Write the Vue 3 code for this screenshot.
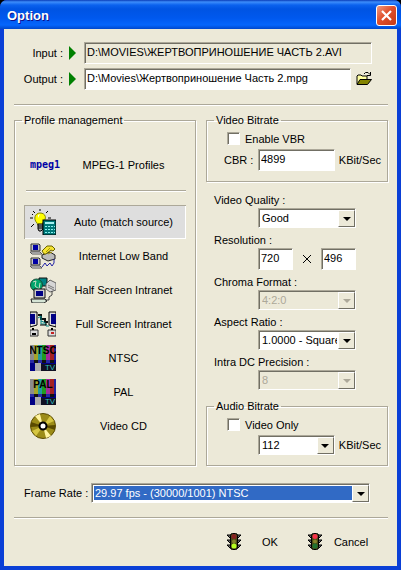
<template>
  <form class="window" @submit.prevent>
    <header class="title-bar">
      <h1>Option</h1>
      <button type="button" class="close" aria-label="Close">
        <svg viewBox="0 0 21 21" width="21" height="21">
          <path d="M6 6L15 15M15 6L6 15" stroke="#fff" stroke-width="2.2" />
        </svg>
      </button>
    </header>

    <main class="content">
      <section class="files">
        <div class="file-row">
          <label for="input-file">Input :</label>
          <span class="marker"></span>
          <input id="input-file" v-model="inputFile" class="field" type="text" readonly />
        </div>
        <div class="file-row">
          <label for="output-file">Output :</label>
          <span class="marker"></span>
          <input id="output-file" v-model="outputFile" class="field" type="text" />
          <button type="button" class="browse" aria-label="Browse">
            <svg viewBox="0 0 16 16" width="16" height="16">
              <path d="M1 13V5L2 4H5L6 5H11V8" fill="#ffffa0" stroke="#000" />
              <path d="M1 13.5L4 8.5H15.5L11.5 13.5Z" fill="#848400" stroke="#000" />
              <path d="M8 3L9.500 1.500H12L14 3.500M14.500 1V4.500H11" fill="none" stroke="#000" />
            </svg>
          </button>
        </div>
      </section>

      <hr />

      <div class="panels">
        <fieldset class="profiles">
          <legend>Profile management</legend>
          <div class="profile-head">
            <span class="mpeg">mpeg1</span>
            <span>MPEG-1 Profiles</span>
          </div>
          <hr />
          <div class="profile-list">
            <button
              v-for="p in profiles"
              :key="p.id"
              type="button"
              class="profile"
              :class="{ active: p.id === profile }"
              :aria-pressed="p.id === profile"
              @click="profile = p.id"
            >
              <svg viewBox="0 0 26 26" width="26" height="26" aria-hidden="true">
                <g v-if="p.id === 'auto'">
                  <path d="M10 0V2M3 2L5 4M18 2L16 4M0 9H3M18 9H21M1 18L4 15M2 5L3 6" stroke="#000" />
                  <path d="M7 14C3 10 5 4 10 4C16 4 17 10 13 13L12 18H9Z" fill="#ffff00" stroke="#848400" />
                  <path d="M8 6L10 5L8 9Z" fill="#fff" />
                  <path d="M8 15H13V20L11 22H9L8 20Z" fill="#aaa" stroke="#000" />
                  <path d="M8 17H13M8 19H13" stroke="#000" />
                  <rect x="13" y="11" width="13" height="15" fill="#007878" stroke="#000" />
                  <rect x="15" y="13" width="9" height="2" fill="#a5f0f0" />
                  <path d="M15 17.500H25M15 20.500H25M15 23.500H25" stroke="#8ee" stroke-dasharray="2 1" />
                </g>
                <g v-else-if="p.id === 'low'">
                  <g v-for="y in [0, 14]" :key="y" :transform="`translate(0 ${y})`">
                    <path d="M1 1H9L10 2V8H1Z" fill="#c6c6c6" stroke="#333" />
                    <rect x="3" y="2" width="5" height="5" fill="#0000a5" />
                    <path d="M0 9H10L12 11H2Z" fill="#eee" stroke="#555" />
                  </g>
                  <path d="M12 12L20 9L25 12V16L18 18L12 15Z" fill="#bbb" stroke="#222" />
                  <path d="M12 8L17 3L22 3L25 6L23 8L21 7L16 11L14 11Z" fill="#f5e431" stroke="#6b6300" />
                  <path d="M16 9L20 5M18 11L22 9" stroke="#a59400" />
                  <path d="M12 24L15 20L17 23L20 20L22 23L24 20V16" fill="none" stroke="#2222a5" />
                </g>
                <g v-else-if="p.id === 'half'">
                  <path d="M9 1H17V9H9Z" fill="#008484" stroke="#111" />
                  <path d="M16 7L20 3L26 6V13L20 15L16 12Z" fill="#d6d6d6" stroke="#666" />
                  <path d="M18 8L24 11M18 10L24 13" stroke="#777" />
                  <circle cx="6.500" cy="8" r="6" fill="#00a56b" stroke="#174b38" />
                  <path d="M3 5L6 4L5 9L9 12L10 6" fill="none" stroke="#c6dec6" />
                  <path d="M4 12H15V21H4Z" fill="#ccc" stroke="#111" />
                  <rect x="6" y="14" width="7" height="5" fill="#000084" />
                  <path d="M1 22H15L17 24L14 26H2Z" fill="#d6e5d6" stroke="#222" />
                  <path d="M22 14V18L19 20V23H15" fill="none" stroke="#444" />
                </g>
                <g v-else-if="p.id === 'full'">
                  <path d="M0 1H7V14L0 16Z" fill="#ddd" stroke="#000" />
                  <rect x="0" y="3" width="5" height="10" fill="#000084" />
                  <path d="M26 1H19V14L26 16Z" fill="#ddd" stroke="#000" />
                  <rect x="21" y="3" width="5" height="10" fill="#000084" />
                  <path d="M8 4H11V8H15V11H18" fill="none" stroke="#111" stroke-width="2" />
                  <path d="M8 7L11 5V13H16V15H19M11 10L16 12" fill="none" stroke="#008484" />
                  <path d="M10 14H16V11" fill="none" stroke="#000" />
                  <path d="M0 19H8V25H0ZM18 19H26V25H18Z" fill="#ddd" stroke="#333" />
                  <path d="M3 17V19M22 17V19M2 23H6" stroke="#000" stroke-width="2" />
                  <rect x="21" y="21" width="3" height="2" fill="#c62121" />
                </g>
                <g v-else-if="p.id === 'ntsc' || p.id === 'pal'">
                  <rect width="26" height="26" fill="#000084" />
                  <rect
                    v-for="(c, i) in bars"
                    :key="i"
                    :x="i * 4"
                    width="4"
                    height="15"
                    :fill="c"
                  />
                  <path d="M0 15H4V18H0ZM8 15H12V18H8ZM16 15H20V18H16Z" fill="#2929a5" />
                  <path d="M4 15H8V18H4ZM12 15H16V18H12ZM20 15H24V18H20Z" fill="#111" />
                  <rect x="5" y="18" width="6" height="8" fill="#adadad" />
                  <rect x="11" y="19" width="15" height="7" fill="#101022" />
                  <text class="bar-name" x="13" y="9" text-anchor="middle">{{ p.label }}</text>
                  <text class="bar-tv" x="20" y="25" text-anchor="middle">TV</text>
                </g>
                <g v-else>
                  <circle cx="13" cy="13" r="12.500" fill="#9c8c18" stroke="#5a4a00" />
                  <path d="M13 13L5 3L10 1ZM13 13L21 23L16 25Z" fill="#fff4a0" />
                  <path d="M13 13L20 3L24 8ZM13 13L6 23L2 18Z" fill="#d6c642" />
                  <path d="M13 13L1 9V14ZM13 13L25 12V17Z" fill="#5a4a00" />
                  <circle cx="13" cy="13" r="3.500" fill="#fff" stroke="#000" stroke-width="2" />
                </g>
              </svg>
              <span>{{ p.label }}</span>
            </button>
          </div>
        </fieldset>

        <div class="settings">
          <fieldset class="bitrate">
            <legend>Video Bitrate</legend>
            <label class="check"><input v-model="vbr" type="checkbox" />Enable VBR</label>
            <div class="rate-row">
              <label for="cbr">CBR :</label>
              <input id="cbr" v-model="cbr" class="field" type="text" />
              <span>KBit/Sec</span>
            </div>
          </fieldset>

          <div class="options">
            <div class="option">
              <label for="quality">Video Quality :</label>
              <div class="combo">
                <select id="quality"><option>Good</option></select>
                <span class="arrow"></span>
              </div>
            </div>
            <div class="option">
              <label for="res-width">Resolution :</label>
              <div class="resolution">
                <input id="res-width" v-model="width" class="field" type="text" />
                <svg viewBox="0 0 8 8" width="8" height="8" aria-hidden="true">
                  <path d="M0 0L8 8M8 0L0 8" stroke="#000" />
                </svg>
                <input v-model="height" class="field" type="text" aria-label="Height" />
              </div>
            </div>
            <div class="option">
              <label for="chroma">Chroma Format :</label>
              <div class="combo">
                <select id="chroma" disabled><option>4:2:0</option></select>
                <span class="arrow"></span>
              </div>
            </div>
            <div class="option">
              <label for="aspect">Aspect Ratio :</label>
              <div class="combo">
                <select id="aspect"><option>1.0000 - Square</option></select>
                <span class="arrow"></span>
              </div>
            </div>
            <div class="option">
              <label for="precision">Intra DC Precision :</label>
              <div class="combo">
                <select id="precision" disabled><option>8</option></select>
                <span class="arrow"></span>
              </div>
            </div>
          </div>

          <fieldset class="bitrate">
            <legend>Audio Bitrate</legend>
            <label class="check"><input v-model="videoOnly" type="checkbox" />Video Only</label>
            <div class="rate-row">
              <span></span>
              <div class="combo">
                <select aria-label="Audio Bitrate"><option>112</option></select>
                <span class="arrow"></span>
              </div>
              <span>KBit/Sec</span>
            </div>
          </fieldset>
        </div>
      </div>

      <div class="frame-rate">
        <label for="fps">Frame Rate :</label>
        <div class="combo focused">
          <select id="fps"><option>29.97 fps - (30000/1001) NTSC</option></select>
          <span class="arrow"></span>
        </div>
      </div>

      <hr />

      <footer class="actions">
        <button v-for="a in actions" :key="a.label" type="button">
          <svg viewBox="0 0 16 17" width="16" height="17" aria-hidden="true">
            <path d="M1 2H15L12 5H4ZM1 7H15L12 10H4ZM1 12H15L12 15H4Z" fill="#6b6b6b" stroke="#000" />
            <rect x="4.500" y="0.500" width="7" height="16" rx="2" fill="#4a4a18" stroke="#000" />
            <circle cx="8" cy="3.500" r="2.500" :fill="a.red" />
            <circle cx="8" cy="8.500" r="2" fill="#848429" />
            <circle cx="8" cy="13" r="2.500" :fill="a.green" />
          </svg>
          <span>{{ a.label }}</span>
        </button>
      </footer>
    </main>
  </form>
</template>

<script setup>
import { ref } from 'vue';

const inputFile = ref('D:\\MOVIES\\ЖЕРТВОПРИНОШЕНИЕ ЧАСТЬ 2.AVI');
const outputFile = ref('D:\\Movies\\Жертвоприношение Часть 2.mpg');

const profiles = [
  { id: 'auto', label: 'Auto (match source)' },
  { id: 'low', label: 'Internet Low Band' },
  { id: 'half', label: 'Half Screen Intranet' },
  { id: 'full', label: 'Full Screen Intranet' },
  { id: 'ntsc', label: 'NTSC' },
  { id: 'pal', label: 'PAL' },
  { id: 'vcd', label: 'Video CD' }
];
const profile = ref('auto');

// colour bars of the TV test card
const bars = ['#8c8c8c', '#a5a529', '#219c9c', '#219c21', '#a5299c', '#a52121', '#21219c'];

const vbr = ref(false);
const cbr = ref('4899');
const width = ref('720');
const height = ref('496');
const videoOnly = ref(false);

const actions = [
  { label: 'OK', red: '#842121', green: '#b5ff21' },
  { label: 'Cancel', red: '#f7314a', green: '#217331' }
];
</script>

<style>
body {
  margin: 0;
  background: #000;
}
</style>

<style scoped>
.window,
.window button,
.window input,
.window select {
  font-family: "Liberation Sans", Arial, sans-serif;
  font-size: 11px;
  line-height: 14px;
  color: #000;
}

.window * {
  box-sizing: border-box;
}

.window {
  box-sizing: border-box;
  display: flex;
  flex-direction: column;
  min-height: 100vh;
  background: #0a3fd6;
  border-radius: 7px 7px 0 0;
  overflow: hidden;
}

.window button {
  margin: 0;
  padding: 0;
  border: none;
  background: none;
}

.title-bar {
  display: flex;
  align-items: center;
  justify-content: space-between;
  height: 29px;
  padding: 2px 4px 0 7px;
  background: linear-gradient(#0a3cb8 0, #3d8dfb 2px, #0b62ee 5px, #0054e3 9px, #0058ee 18px, #0566fc 25px, #0048cc 29px);
}

.title-bar h1 {
  margin: 0;
  font-size: 13px;
  line-height: 18px;
  color: #fff;
  text-shadow: 1px 1px #0f1089;
}

.title-bar .close {
  height: 21px;
  border: 1px solid #fff;
  border-radius: 3px;
  background: linear-gradient(135deg, #f09a80, #e0502c 45%, #c63a16);
}

.close svg {
  display: block;
  margin: -1px;
}

.content {
  flex: 1;
  padding: 13px 9px 0 10px;
  margin: 0 4px 4px;
  background: #ece9d8;
}

hr {
  height: 2px;
  margin: 0;
  border: none;
  border-top: 1px solid #aca899;
  border-bottom: 1px solid #fff;
}

.files {
  display: flex;
  flex-direction: column;
  gap: 4px;
  padding-right: 16px;
  margin-bottom: 14px;
}

.file-row {
  display: flex;
  align-items: center;
}

.file-row label {
  width: 49px;
  text-align: right;
}

.marker {
  margin: 0 8px 0 6px;
  border: solid transparent;
  border-width: 7px 0 7px 7px;
  border-left-color: #008000;
}

.field {
  flex: 1;
  min-width: 0;
  height: 22px;
  padding: 0 1px 2px 2px;
  border: 1px solid;
  border-color: #aca899 #fff #fff #aca899;
  border-radius: 0;
  background: #fff;
  box-shadow: inset 1px 1px #716f64;
  outline: none;
}

.field:read-only {
  background: #ece9d8;
}

.file-row .browse {
  height: 16px;
  margin-left: 5px;
}

svg {
  display: block;
}

.panels {
  display: grid;
  grid-template-columns: 1fr 1fr;
  gap: 10px;
  margin-top: 7px;
}

fieldset {
  min-width: 0;
  margin: 0;
  border: 1px solid #aca899;
  box-shadow: 1px 1px #fff, inset 1px 1px #fff;
}

legend {
  padding: 0 2px;
  margin-left: -2px;
}

.profiles {
  padding: 0 9px;
}

.profile-head,
.window .profile {
  display: grid;
  grid-template-columns: 26px 1fr;
  gap: 5px;
  align-items: center;
  width: 100%;
  height: 34px;
  padding-left: 6px;
  text-align: center;
}

.profile-head {
  margin-top: 21px;
}

.mpeg {
  font-family: "DejaVu Sans Mono", monospace;
  font-size: 10px;
  font-weight: bold;
  color: #0000a5;
}

.profiles hr {
  margin: 8px 0 13px 2px;
}

.window .profile.active {
  background: #dedede;
  box-shadow: inset 1px 1px #aca899, inset -1px -1px #fff;
}

.bar-name {
  font-size: 10px;
  font-weight: bold;
}

.bar-tv {
  font-size: 8px;
  fill: #31bdbd;
}

.bitrate {
  padding: 5px 6px 10px 17px;
}

.bitrate legend {
  margin-left: -10px;
}

.check {
  display: flex;
  align-items: center;
  gap: 5px;
  height: 13px;
  margin: 0 0 4px 3px;
}

.check input {
  appearance: none;
  width: 13px;
  height: 13px;
  margin: 0;
  border: 1px solid;
  border-color: #aca899 #fff #fff #aca899;
  background: #fff;
  box-shadow: inset 1px 1px #716f64;
}

.check input:checked {
  background: #316ac5;
}

.rate-row {
  display: grid;
  grid-template-columns: 34px 1fr auto;
  align-items: center;
}

.rate-row > span:last-child {
  margin-left: 4px;
}

.options {
  display: flex;
  flex-direction: column;
  gap: 5px;
  padding: 0 32px 0 8px;
  margin: 11px 0 9px;
}

.option label {
  display: block;
  margin-bottom: 1px;
}

.option .combo,
.resolution {
  margin-left: 44px;
}

.resolution {
  display: flex;
  align-items: center;
  justify-content: space-between;
}

.resolution .field {
  flex: none;
  width: 35px;
}

.combo {
  position: relative;
  height: 20px;
  padding: 2px;
  border: 1px solid;
  border-color: #aca899 #fff #fff #aca899;
  background: #fff;
  box-shadow: inset 1px 1px #716f64;
}

.combo select {
  appearance: none;
  display: block;
  width: 100%;
  height: 100%;
  padding: 0 16px 0 1px;
  border: none;
  border-radius: 0;
  background: transparent;
  outline: none;
}

.combo select:disabled {
  color: #aca899;
  opacity: 1;
}

.combo:has(select:disabled) {
  background: #ece9d8;
}

.combo.focused select {
  background: #316ac5;
  color: #fff;
}

.arrow {
  position: absolute;
  top: 1px;
  right: 0;
  bottom: 0;
  display: grid;
  place-items: center;
  width: 17px;
  border: 1px solid;
  border-color: #fff #716f64 #716f64 #fff;
  background: #ece9d8;
  pointer-events: none;
}

.arrow::before {
  content: "";
  border: solid transparent;
  border-width: 4px 4px 0;
  border-top-color: #000;
}

select:disabled + .arrow::before {
  border-top-color: #aca899;
}

.frame-rate {
  display: flex;
  align-items: center;
  padding: 0 18px 0 10px;
  margin: 17px 0 14px;
}

.frame-rate label {
  width: 67px;
}

.frame-rate .combo {
  flex: 1;
}

.actions {
  display: flex;
  justify-content: flex-end;
  gap: 9px;
  padding: 14px 9px 15px 0;
}

.window .actions button {
  display: grid;
  grid-template-columns: 16px 1fr;
  align-items: center;
  width: 72px;
}
</style>
